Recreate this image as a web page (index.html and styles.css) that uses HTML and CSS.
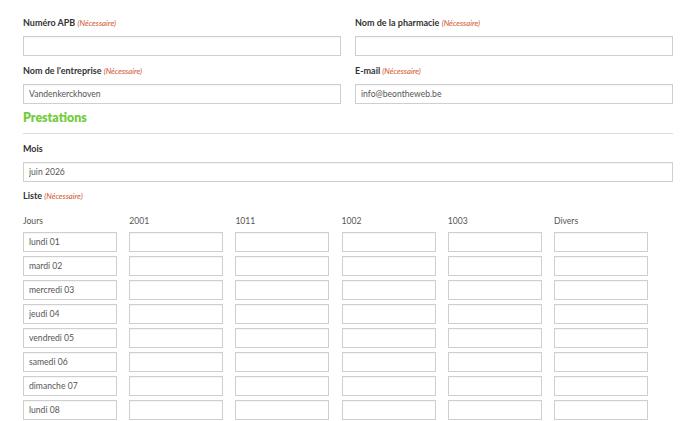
FILE: index.html
```html
<!DOCTYPE html>
<html lang="fr">
<head>
<meta charset="utf-8">
<title>Prestations</title>
<link rel="stylesheet" href="styles.css">
</head>
<body>
<form class="form">
  <div class="pair">
    <div class="field">
      <label class="label">Numéro APB <span class="req">(Nécessaire)</span></label>
      <input class="input" type="text" value="">
    </div>
    <div class="field">
      <label class="label">Nom de la pharmacie <span class="req">(Nécessaire)</span></label>
      <input class="input" type="text" value="">
    </div>
    <div class="field">
      <label class="label">Nom de l'entreprise <span class="req">(Nécessaire)</span></label>
      <input class="input" type="text" value="Vandenkerckhoven">
    </div>
    <div class="field">
      <label class="label">E-mail <span class="req">(Nécessaire)</span></label>
      <input class="input" type="email" value="info@beontheweb.be">
    </div>
  </div>

  <h2 class="section">Prestations</h2>
  <hr class="rule">

  <div class="field">
    <label class="label">Mois</label>
    <input class="input" type="text" value="juin 2026">
  </div>

  <div class="field list">
    <label class="label">Liste <span class="req">(Nécessaire)</span></label>
    <div class="grid">
      <div class="head">Jours</div>
      <div class="head">2001</div>
      <div class="head">1011</div>
      <div class="head">1002</div>
      <div class="head">1003</div>
      <div class="head">Divers</div>

      <input class="cell" value="lundi 01"><input class="cell"><input class="cell"><input class="cell"><input class="cell"><input class="cell">
      <input class="cell" value="mardi 02"><input class="cell"><input class="cell"><input class="cell"><input class="cell"><input class="cell">
      <input class="cell" value="mercredi 03"><input class="cell"><input class="cell"><input class="cell"><input class="cell"><input class="cell">
      <input class="cell" value="jeudi 04"><input class="cell"><input class="cell"><input class="cell"><input class="cell"><input class="cell">
      <input class="cell" value="vendredi 05"><input class="cell"><input class="cell"><input class="cell"><input class="cell"><input class="cell">
      <input class="cell" value="samedi 06"><input class="cell"><input class="cell"><input class="cell"><input class="cell"><input class="cell">
      <input class="cell" value="dimanche 07"><input class="cell"><input class="cell"><input class="cell"><input class="cell"><input class="cell">
      <input class="cell" value="lundi 08"><input class="cell"><input class="cell"><input class="cell"><input class="cell"><input class="cell">
    </div>
  </div>
</form>
</body>
</html>
```

FILE: styles.css
```css
* {
  box-sizing: border-box;
}

html, body {
  margin: 0;
  background: #ffffff;
}

body {
  font-family: Lato, "Open Sans", sans-serif;
  color: #333333;
}

.form {
  width: 650px;
  margin: 0 0 0 23px;
  padding-top: 16px;
}

.pair {
  display: grid;
  grid-template-columns: 318px 318px;
  column-gap: 14px;
  row-gap: 8px;
}

.field {
  display: flex;
  flex-direction: column;
}

.label {
  font-size: 9px;
  line-height: 14px;
  font-weight: 700;
  color: #333333;
  margin-bottom: 6px;
}

.req {
  font-size: 7.8px;
  font-weight: 400;
  font-style: italic;
  color: #d0542c;
}

.input,
.cell {
  display: block;
  height: 20px;
  margin: 0;
  padding: 0 5px;
  border: 1px solid #cfcfcf;
  border-radius: 0;
  background: #ffffff;
  box-shadow: inset 0 1px 1px rgba(0, 0, 0, 0.04);
  font-family: Lato, "Open Sans", sans-serif;
  font-size: 8.6px;
  color: #555555;
  outline: none;
}

.input {
  width: 100%;
}

.section {
  margin: 6px 0 0;
  font-size: 12.4px;
  line-height: 16px;
  font-weight: 800;
  color: #73cc3f;
}

.rule {
  margin: 7px 0 8px;
  border: 0;
  border-top: 1px solid #dcdcdc;
  height: 0;
}

.list {
  margin-top: 7px;
}

.grid {
  display: grid;
  grid-template-columns: repeat(6, 94px);
  column-gap: 12.2px;
  row-gap: 4px;
  margin-top: 5px;
}

.head {
  font-size: 8.6px;
  line-height: 14px;
  color: #555555;
}

.cell {
  width: 94px;
}
```
